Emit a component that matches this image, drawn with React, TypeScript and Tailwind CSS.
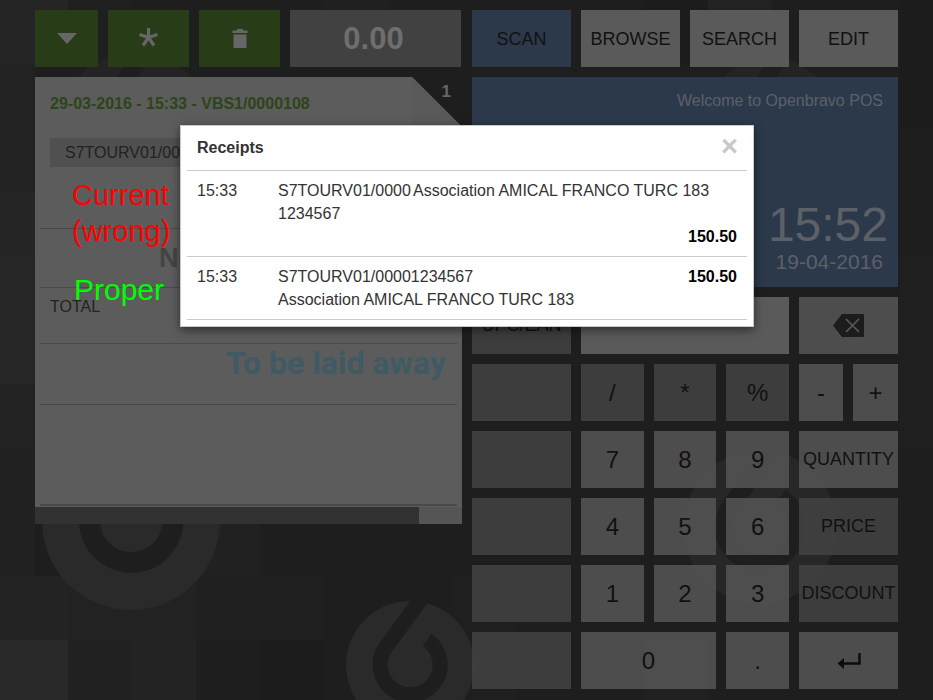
import { FC, ReactNode } from "react";

const tiles: [number, number, number, number, string][] = [
  [0, 0, 68, 64, "#252525"],
  [68, 0, 64, 64, "#1f1f1f"],
  [324, 0, 64, 64, "#202020"],
  [644, 0, 64, 64, "#1c1c1c"],
  [708, 0, 64, 64, "#222222"],
  [900, 0, 33, 128, "#1c1c1c"],
  [0, 64, 35, 128, "#222222"],
  [0, 192, 35, 64, "#252525"],
  [0, 256, 35, 128, "#262626"],
  [0, 384, 35, 64, "#222222"],
  [0, 448, 35, 128, "#212121"],
  [0, 576, 68, 64, "#232323"],
  [0, 640, 68, 60, "#292929"],
  [68, 512, 64, 64, "#262626"],
  [132, 512, 64, 64, "#242424"],
  [68, 576, 128, 64, "#222222"],
  [68, 640, 64, 60, "#212121"],
  [132, 640, 64, 60, "#232323"],
  [196, 512, 64, 64, "#212121"],
  [196, 576, 128, 64, "#1f1f1f"],
  [260, 640, 64, 60, "#1b1b1b"],
  [452, 576, 64, 124, "#1f1f1f"],
  [644, 640, 64, 60, "#212121"],
  [900, 256, 33, 192, "#1f1f1f"],
];

const Logo: FC<{ cx: number; cy: number; scale: number; fill?: string }> = ({
  cx,
  cy,
  scale,
  fill = "#2a2a2a",
}) => (
  <g transform={`translate(${cx} ${cy}) scale(${scale})`}>
    <circle r="64" fill={fill} />
    <path
      d="M17 -25 A30 30 0 1 1 -24 -18 L14 -70"
      fill="none"
      stroke="#1e1e1e"
      strokeWidth="15"
    />
  </g>
);

const Backdrop = () => (
  <svg className="absolute inset-0" width="933" height="700" viewBox="0 0 933 700">
    <rect width="933" height="700" fill="#1e1e1e" />
    {tiles.map(([x, y, w, h, fill]) => (
      <rect key={`${x}-${y}`} x={x} y={y} width={w} height={h} fill={fill} />
    ))}
    <Logo cx={131} cy={521} scale={1.39} />
    <Logo cx={410} cy={665} scale={1} />
    <Logo cx={760} cy={527} scale={1.2} fill="#272727" />
    <Logo cx={770} cy={125} scale={1.05} fill="#242424" />
    <Logo cx={135} cy={125} scale={1.15} fill="#242424" />
  </svg>
);

const Key: FC<{ className?: string; dark?: boolean; children?: ReactNode }> = ({
  className = "",
  dark,
  children,
}) => (
  <div
    className={`flex h-[57px] items-center justify-center text-[#111] ${
      dark ? "bg-[#434343]/85" : "bg-[#565656]/85"
    } ${className}`}
  >
    {children}
  </div>
);

const Action: FC<{ label: ReactNode; dark?: boolean }> = ({ label, dark }) => (
  <Key dark={dark} className="w-[99px] text-[18px]">
    {label}
  </Key>
);

const TopAction: FC<{ label: string }> = ({ label }) => (
  <div className="flex h-[57px] w-[99px] items-center justify-center bg-[#5a5a5a] pt-[1px]">
    {label}
  </div>
);

const Digit: FC<{ label: string; dark?: boolean; wide?: boolean }> = ({
  label,
  dark,
  wide,
}) => (
  <Key dark={dark} className={`${wide ? "w-[135px]" : "w-[63px]"} text-[24px]`}>
    {label}
  </Key>
);

const GreenButton: FC<{ className: string; children: ReactNode }> = ({
  className,
  children,
}) => (
  <div className={`flex h-[57px] items-center justify-center bg-[#283c17] ${className}`}>
    {children}
  </div>
);

const KeyRow: FC<{ right: ReactNode; children: ReactNode }> = ({ right, children }) => (
  <div className="flex gap-[10px]">
    <Key dark className="w-[99px]" />
    <div className="flex w-[208px] gap-[10px]">{children}</div>
    {right}
  </div>
);

const Receipts = () => (
  <div className="absolute left-[180px] top-[125px] h-[202px] w-[574px] border border-[#c8c8c8] bg-white px-[6px] text-[16px] text-[#333] shadow-[0_3px_9px_rgba(0,0,0,0.5)]">
    <div className="flex h-[45px] items-center justify-between border-b border-[#ccc] pl-[10px] pr-[9px]">
      <span className="font-bold">Receipts</span>
      <span className="-mt-[4px] text-[29px] font-bold leading-none text-[#c8c8c8]">×</span>
    </div>
    <div className="h-[86px] border-b border-[#ccc] px-[10px] pt-[8px] leading-[23px]">
      <div className="flex">
        <span className="w-[81px]">15:33</span>
        <span className="w-[135px] break-all">S7TOURV01/0000 1234567</span>
        <span>Association AMICAL FRANCO TURC 183</span>
      </div>
      <div className="text-right font-bold text-black">150.50</div>
    </div>
    <div className="h-[63px] border-b border-[#ccc] px-[10px] pt-[8px] leading-[23px]">
      <div className="flex">
        <span className="w-[81px]">15:33</span>
        <div className="flex-1">
          <div>S7TOURV01/00001234567</div>
          <div>Association AMICAL FRANCO TURC 183</div>
        </div>
        <span className="font-bold text-black">150.50</span>
      </div>
    </div>
  </div>
);

const OrderPanel = () => (
  <div className="relative flex h-[447px] w-[427px] flex-col bg-[#5c5c5c]">
    <svg className="absolute right-0 top-0" width="50" height="50" viewBox="0 0 50 50">
      <path d="M0 0 H50 V50 Z" fill="#1e1e1e" />
      <path d="M0 0 L50 50 H0 Z" fill="#595959" />
    </svg>
    <span className="absolute right-[11px] top-[5px] text-[17px] font-bold leading-[20px] text-[#666]">
      1
    </span>
    <div className="flex h-[61px] items-start pl-[15px] pt-[17px] text-[16px] font-bold leading-[20px] text-[#2c4519]">
      29-03-2016 - 15:33 - VBS1/0000108
    </div>
    <div className="mx-[15px] flex h-[29px] items-center bg-[#505050] px-[15px] text-[16px] text-[#222]">
      S7TOURV01/0000
    </div>
    <div className="mx-[5px] flex flex-1 flex-col">
      <div className="h-[62px] border-b border-[#4a4a4a]" />
      <div className="flex h-[59px] items-center border-b border-[#4a4a4a] pl-[119px] text-[27px] font-bold text-[#444]">
        No items
      </div>
      <div className="h-[56px] border-b border-[#4a4a4a] pl-[10px] pt-[9px] text-[16px] leading-[20px] text-[#222]">
        TOTAL
      </div>
      <div className="flex h-[61px] items-start justify-end border-b border-[#4a4a4a] pr-[11px] pt-[1px] font-['Roboto',sans-serif] text-[32px] font-bold leading-[36px] text-[#3f5a63]">
        To be laid away
      </div>
      <div className="h-[101px] border-b-2 border-[#4a4a4a]" />
    </div>
    <div className="flex h-[17px]">
      <div className="w-[384px] bg-[#323232]" />
      <div className="flex-1 bg-[#555]" />
    </div>
  </div>
);

const App = () => (
  <div className="relative h-[700px] w-full overflow-hidden bg-[#1e1e1e] font-['Liberation_Sans',Arial,sans-serif]">
    <Backdrop />
    <div className="relative flex gap-[10px] pl-[35px] pt-[10px]">
      <div className="flex w-[427px] flex-col gap-[10px]">
        <div className="flex gap-[10px]">
          <GreenButton className="w-[63px]">
            <svg width="20" height="11" viewBox="0 0 20 11">
              <path d="M0 0 H20 L10 11 Z" fill="#666" />
            </svg>
          </GreenButton>
          <GreenButton className="w-[81px] pb-[2px]">
            <svg width="19" height="19" viewBox="0 0 19 19">
              <path
                d="M9.5 0 V9.5 M9.5 9.5 L0.5 6.5 M9.5 9.5 L18.5 6.5 M9.5 9.5 L4 17.5 M9.5 9.5 L15 17.5"
                stroke="#666"
                strokeWidth="3.2"
                fill="none"
              />
            </svg>
          </GreenButton>
          <GreenButton className="w-[81px]">
            <svg width="16" height="19" viewBox="0 0 16 19">
              <path d="M5 0 H11 V1.5 H15.5 V4 H0.5 V1.5 H5 Z M1.5 5.5 H14.5 V19 H1.5 Z" fill="#666" />
            </svg>
          </GreenButton>
          <div className="flex h-[57px] w-[171px] items-center justify-center bg-[#414141] pr-[4px] pt-[1px] text-[31px] font-bold text-[#6e6e6e]">
            0.00
          </div>
        </div>
        <OrderPanel />
      </div>
      <div className="flex w-[426px] flex-col gap-[10px]">
        <div className="flex gap-[10px] text-[18px] text-[#111]">
          <div className="flex h-[57px] w-[99px] items-center justify-center bg-[#2c394b] pt-[1px]">
            SCAN
          </div>
          <TopAction label="BROWSE" />
          <TopAction label="SEARCH" />
          <TopAction label="EDIT" />
        </div>
        <div className="flex h-[210px] flex-col items-end bg-[#2c394b] pr-[15px] text-[#5c6067]">
          <div className="mt-[14px] text-[16px] leading-[20px]">Welcome to Openbravo POS</div>
          <div className="-mr-[5px] mt-[87px] text-[48px] leading-[54px]">15:52</div>
          <div className="-mt-[2px] text-[21px] leading-[24px]">19-04-2016</div>
        </div>
        <div className="flex gap-[10px]">
          <Action label="UPC/EAN" dark />
          <div className="h-[57px] w-[208px] bg-[#5a5a5a]" />
          <Key className="w-[99px]">
            <svg width="33" height="25" viewBox="0 0 33 25">
              <path d="M10 1 H31 Q32 1 32 2 V23 Q32 24 31 24 H10 L1 12.5 Z" fill="#1c1c1c" />
              <path d="M14 6 L27 19 M27 6 L14 19" stroke="#5a5a5a" strokeWidth="1.6" />
            </svg>
          </Key>
        </div>
        <KeyRow
          right={
            <div className="flex w-[99px] gap-[10px]">
              <Key className="w-[44px] text-[24px]">-</Key>
              <Key className="w-[45px] text-[24px]">+</Key>
            </div>
          }
        >
          <Digit label="/" dark />
          <Digit label="*" dark />
          <Digit label="%" dark />
        </KeyRow>
        <KeyRow right={<Action label="QUANTITY" />}>
          <Digit label="7" />
          <Digit label="8" />
          <Digit label="9" />
        </KeyRow>
        <KeyRow right={<Action label="PRICE" dark />}>
          <Digit label="4" />
          <Digit label="5" />
          <Digit label="6" />
        </KeyRow>
        <KeyRow right={<Action label="DISCOUNT" dark />}>
          <Digit label="1" />
          <Digit label="2" />
          <Digit label="3" />
        </KeyRow>
        <KeyRow
          right={
            <Key className="w-[99px]">
              <svg width="24" height="18" viewBox="0 0 24 18">
                <path d="M22.5 1 V11.5 H5" fill="none" stroke="#0c0c0c" strokeWidth="2.4" />
                <path d="M0.5 11.5 L7 6 V17 Z" fill="#0c0c0c" />
              </svg>
            </Key>
          }
        >
          <Digit label="0" wide />
          <Digit label="." />
        </KeyRow>
      </div>
    </div>
    <Receipts />
    <div className="absolute left-[72px] top-[177px] text-[29px] leading-[36px] text-[#ff0000]">
      Current
      <br />
      (wrong)
    </div>
    <div className="absolute left-[74px] top-[272px] text-[30px] leading-[36px] text-[#00ff00]">
      Proper
    </div>
  </div>
);

export default App;
